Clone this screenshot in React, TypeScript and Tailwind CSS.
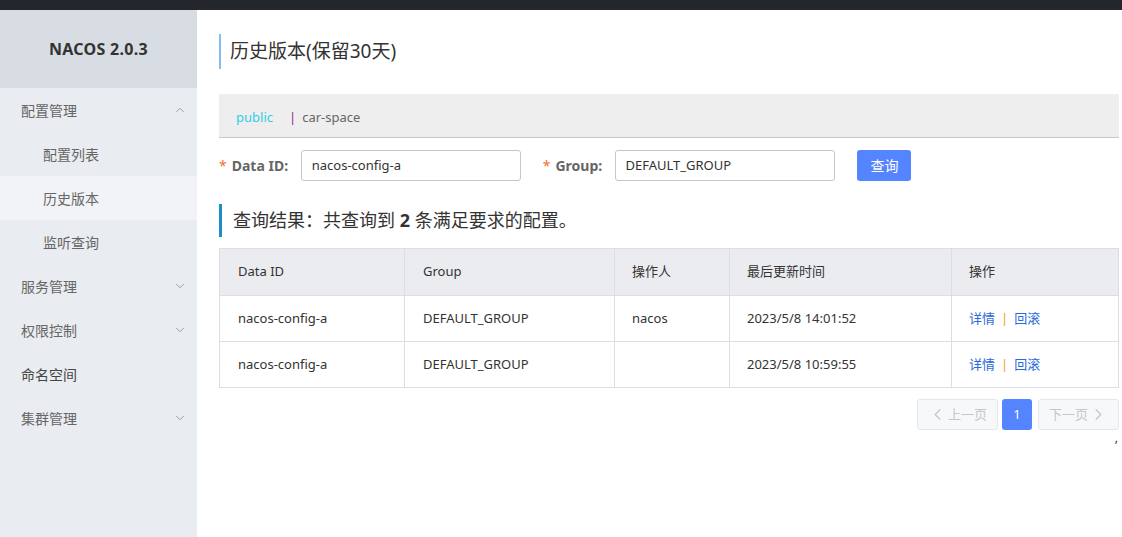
import { ChevronDown, ChevronUp, ChevronLeft, ChevronRight } from "lucide-react";

const font = "font-['Noto_Sans','Noto_Sans_CJK_SC',sans-serif]";

const menu = [
  { label: "配置管理", icon: "up", level: 0 },
  { label: "配置列表", level: 1 },
  { label: "历史版本", level: 1, active: true },
  { label: "监听查询", level: 1 },
  { label: "服务管理", icon: "down", level: 0 },
  { label: "权限控制", icon: "down", level: 0 },
  { label: "命名空间", level: 0, dark: true },
  { label: "集群管理", icon: "down", level: 0 },
];

const rows = [
  { id: "nacos-config-a", group: "DEFAULT_GROUP", user: "nacos", time: "2023/5/8 14:01:52" },
  { id: "nacos-config-a", group: "DEFAULT_GROUP", user: "", time: "2023/5/8 10:59:55" },
];

const App = () => {
  return (
    <div className={`${font} w-[1122px] h-[537px] flex flex-col bg-white text-[#333] overflow-hidden`}>
      {/* ==top bar== */}
      <div className="h-[10px] bg-[#23272c] shrink-0" />
      <div className="flex flex-1">
        {/* ==sidebar== */}
        <div className="w-[197px] bg-[#e9ecf0] shrink-0">
          <div className="h-[78px] bg-[#d8dde4] flex items-center justify-center font-bold text-[16px] text-[#333] tracking-[0.3px]">
            NACOS 2.0.3
          </div>
          {menu.map((m) => (
            <div
              key={m.label}
              className={`h-[44px] flex items-center justify-between text-[14px] pr-[10px] ${
                m.level ? "pl-[43px]" : "pl-[21px]"
              } ${m.active ? "bg-[#f2f3f7]" : ""} ${m.dark ? "text-[#444]" : "text-[#666]"}`}
            >
              <span>{m.label}</span>
              {m.icon === "up" && <ChevronUp size={14} strokeWidth={1.3} className="text-[#888]" />}
              {m.icon === "down" && <ChevronDown size={14} strokeWidth={1.3} className="text-[#888]" />}
            </div>
          ))}
        </div>

        {/* ==main== */}
        <div className="flex-1 pl-[22px] pr-[3px] pt-[24px]">
          <div className="border-l-2 border-[#82bff0] h-[35px] flex items-center pl-[9px] text-[19px] text-[#333]">
            历史版本(保留30天)
          </div>

          <div className="mt-[25px] h-[44px] bg-[#eeeeee] border-b border-[#c8c8c8] flex items-center pl-[17px] pt-[5px] text-[13px]">
            <span className="text-[#33cde5]">public</span>
            <span className="text-[#8a2f8a] ml-[16px] mr-[6px]">|</span>
            <span className="text-[#666]">car-space</span>
          </div>

          {/* ==form== */}
          <div className="flex items-center mt-[12px] h-[31px] text-[14px]">
            <span className="text-[#f5712b] mr-[5px]">*</span>
            <span className="font-bold text-[#666] w-[69px]">Data ID:</span>
            <div className="w-[220px] h-[31px] border border-[#c4c6cf] rounded-[3px] flex items-center px-[10px] text-[13px] text-[#333]">
              nacos-config-a
            </div>
            <span className="text-[#f5712b] ml-[22px] mr-[5px]">*</span>
            <span className="font-bold text-[#666] w-[60px]">Group:</span>
            <div className="w-[220px] h-[31px] border border-[#c4c6cf] rounded-[3px] flex items-center px-[9px] text-[13px] text-[#333]">
              DEFAULT_GROUP
            </div>
            <button className="ml-[22px] w-[54px] h-[31px] bg-[#5584ff] rounded-[3px] text-white text-[14px]">
              查询
            </button>
          </div>

          <div className="mt-[23px] border-l-[3px] border-[#1b8ec9] h-[33px] flex items-center pl-[11px] text-[18px] text-[#333]">
            查询结果：共查询到&nbsp;<b className="font-bold">2</b>&nbsp;条满足要求的配置。
          </div>

          {/* ==table== */}
          <table className="mt-[11px] w-[900px] border-collapse text-[13px] text-[#333] table-fixed">
            <thead>
              <tr className="h-[47px] bg-[#ebecf0]">
                <th className="w-[185px] border border-[#dcdee3] text-left font-normal pl-[18px]">Data ID</th>
                <th className="w-[210px] border border-[#dcdee3] text-left font-normal pl-[18px]">Group</th>
                <th className="w-[115px] border border-[#dcdee3] text-left font-normal pl-[17px]">操作人</th>
                <th className="w-[222px] border border-[#dcdee3] text-left font-normal pl-[17px]">最后更新时间</th>
                <th className="border border-[#dcdee3] text-left font-normal pl-[17px]">操作</th>
              </tr>
            </thead>
            <tbody>
              {rows.map((r, i) => (
                <tr key={i} className="h-[46px]">
                  <td className="border border-[#dcdee3] pl-[18px]">{r.id}</td>
                  <td className="border border-[#dcdee3] pl-[18px]">{r.group}</td>
                  <td className="border border-[#dcdee3] pl-[17px]">{r.user}</td>
                  <td className="border border-[#dcdee3] pl-[17px]">{r.time}</td>
                  <td className="border border-[#dcdee3] pl-[17px]">
                    <span className="text-[#2a6ad8]">详情</span>
                    <span className="text-[#f0a020] mx-[6px]">|</span>
                    <span className="text-[#2a6ad8]">回滚</span>
                  </td>
                </tr>
              ))}
            </tbody>
          </table>

          {/* ==pagination== */}
          <div className="w-[900px] flex justify-end items-center gap-[4px] mt-[11px] text-[13px]">
            <div className="w-[81px] h-[31px] bg-[#f7f8fa] border border-[#e6e7eb] rounded-[3px] flex items-center justify-center text-[#c4c6cf]">
              <ChevronLeft size={19} strokeWidth={1.6} />
              <span className="ml-[1px]">上一页</span>
            </div>
            <div className="w-[30px] h-[31px] bg-[#5584ff] rounded-[3px] flex items-center justify-center text-white">
              1
            </div>
            <div className="w-[81px] h-[31px] ml-[2px] bg-[#f7f8fa] border border-[#e6e7eb] rounded-[3px] flex items-center justify-center text-[#c4c6cf]">
              <span className="mr-[1px]">下一页</span>
              <ChevronRight size={19} strokeWidth={1.6} />
            </div>
          </div>
          <div className="w-[900px] text-right text-[12px] leading-none mt-[2px] pr-[1px]">,</div>
        </div>
      </div>
    </div>
  );
};

export default App;
